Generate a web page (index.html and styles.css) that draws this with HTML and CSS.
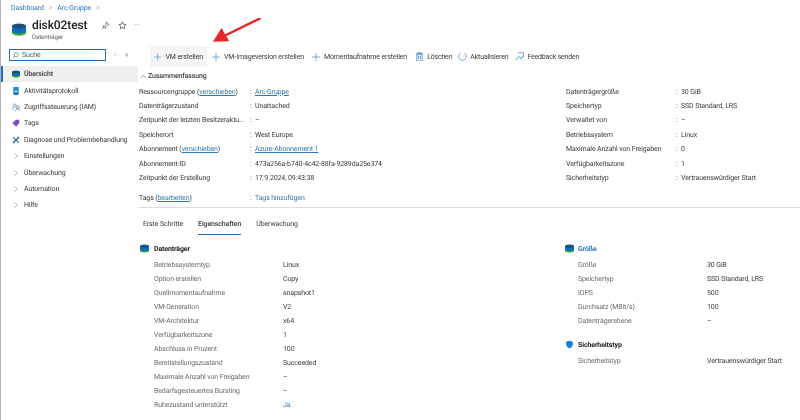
FILE: index.html
```html
<!DOCTYPE html>
<html lang="de">
<head>
<meta charset="utf-8">
<title>disk02test</title>
<link rel="stylesheet" href="styles.css">
</head>
<body>
<svg width="0" height="0" class="defs">
  <symbol id="disk" viewBox="0 0 16 14">
    <path d="M0 8.500h16V11c0 1.700-3.600 3-8 3s-8-1.300-8-3z" fill="#3fa535"/>
    <path d="M0 3h16v6c0 1.400-3.600 2.500-8 2.500S0 10.400 0 9z" fill="#0f6cbd"/>
    <ellipse cx="8" cy="3" rx="8" ry="3" fill="#1d4f7c"/>
  </symbol>
</svg>
<div class="page">
  <nav class="crumbs"><a>Dashboard</a><span class="sep">&gt;</span><a>Arc-Gruppe</a><span class="sep">&gt;</span></nav>
  <header class="title-row">
    <svg class="title-icon"><use href="#disk"/></svg>
    <div class="title-text">
      <div class="title-line">
        <h1>disk02test</h1>
        <svg class="ti pin" viewBox="0 0 10 10"><path d="M6 1l3 3-2 .8-1.800 1.800-.2 1.700L2.200 5.500l1.700-.2 1.800-1.800zM3.500 6.500L1 9" fill="none" stroke="#555" stroke-width=".8"/></svg>
        <svg class="ti star" viewBox="0 0 10 10"><path d="M5 1l1.200 2.600 2.800.3-2.100 1.900.6 2.800L5 7.200 2.500 8.600l.6-2.800L1 3.900l2.800-.3z" fill="none" stroke="#444" stroke-width=".8"/></svg>
        <span class="more">···</span>
      </div>
      <div class="subtitle">Datenträger</div>
    </div>
  </header>
  <div class="main">
    <aside class="side">
      <div class="search-row">
        <div class="search">
          <svg class="search-ic" viewBox="0 0 10 10"><circle cx="6" cy="4" r="2.800" fill="none" stroke="#555" stroke-width=".9"/><path d="M4 6L1 9" stroke="#555" stroke-width=".9"/></svg>
          <span>Suche</span>
        </div>
        <span class="s-ic">◦</span>
        <span class="s-ic">«</span>
      </div>
      <ul class="menu">
        <li class="item active"><svg class="m-ic"><use href="#disk"/></svg>Übersicht</li>
        <li class="item"><svg class="m-ic" viewBox="0 0 12 12"><rect x="2" width="8" height="12" rx="1" fill="#1b87c9"/><rect x="3.500" y="5.500" width="5" height="1.500" fill="#fff"/></svg>Aktivitätsprotokoll</li>
        <li class="item"><svg class="m-ic" viewBox="0 0 12 12"><circle cx="4" cy="3.500" r="2" fill="none" stroke="#3b7fc4" stroke-width="1"/><circle cx="8.500" cy="6.500" r="2" fill="none" stroke="#555" stroke-width="1"/><path d="M1 10c0-2.500 1.500-3.500 3-3.500M5 12c0-2 1.500-3 3.500-3s3 1 3 3" fill="none" stroke="#3b7fc4" stroke-width="1"/></svg>Zugriffssteuerung (IAM)</li>
        <li class="item"><svg class="m-ic" viewBox="0 0 12 12"><path d="M6 1h5v5l-5 5.500L.5 6z" fill="#7c4fb5"/></svg>Tags</li>
        <li class="item"><svg class="m-ic" viewBox="0 0 12 12"><path d="M1.500 1.500l9 9" stroke="#3c8fd0" stroke-width="2"/><path d="M10.500 1.500l-9 9" stroke="#1f5f95" stroke-width="2"/></svg>Diagnose und Problembehandlung</li>
        <li class="item"><svg class="m-ic chev" viewBox="0 0 12 12"><path d="M4 2l4 4-4 4" fill="none" stroke="#666"/></svg>Einstellungen</li>
        <li class="item"><svg class="m-ic chev" viewBox="0 0 12 12"><path d="M4 2l4 4-4 4" fill="none" stroke="#666"/></svg>Überwachung</li>
        <li class="item"><svg class="m-ic chev" viewBox="0 0 12 12"><path d="M4 2l4 4-4 4" fill="none" stroke="#666"/></svg>Automation</li>
        <li class="item"><svg class="m-ic chev" viewBox="0 0 12 12"><path d="M4 2l4 4-4 4" fill="none" stroke="#666"/></svg>Hilfe</li>
      </ul>
    </aside>
    <main class="content">
      <div class="toolbar">
        <button class="tool t1"><svg class="t-ic" viewBox="0 0 10 10"><path d="M5 0v10M0 5h10" stroke="#3f83c4" stroke-width=".8"/></svg>VM erstellen</button>
        <button class="tool t2"><svg class="t-ic" viewBox="0 0 10 10"><path d="M5 0v10M0 5h10" stroke="#3f83c4" stroke-width=".8"/></svg>VM-Imageversion erstellen</button>
        <button class="tool"><svg class="t-ic" viewBox="0 0 10 10"><path d="M5 0v10M0 5h10" stroke="#3f83c4" stroke-width=".8"/></svg>Momentaufnahme erstellen</button>
        <button class="tool t4"><svg class="t-ic wide" viewBox="0 0 10 10"><path d="M2 2.500h6V10H2zM1 2h8M3.500 1.500V.5h3v1M4 4v4M6 4v4" fill="none" stroke="#3f83c4" stroke-width=".9"/></svg>Löschen</button>
        <button class="tool t5"><svg class="t-ic wide" viewBox="0 0 10 10"><path d="M7 1.200A4.300 4.300 0 1 1 3 1.200" fill="none" stroke="#3f83c4" stroke-width=".8"/></svg>Aktualisieren</button>
        <button class="tool t6"><svg class="t-ic wide" viewBox="0 0 10 10"><path d="M3.500.8h6v5h-3M1 9.500l2.500-4M3.500 5.500h2l2 4" fill="none" stroke="#3f83c4" stroke-width=".8"/></svg>Feedback senden</button>
      </div>
      <div class="summary-head"><svg class="caret" viewBox="0 0 8 8"><path d="M1 5.500L4 2.500l3 3" fill="none" stroke="#666" stroke-width=".8"/></svg>Zusammenfassung</div>
      <section class="summary">
        <dl class="ess">
          <div class="row"><dt>Ressourcengruppe (<a class="u">verschieben</a>)</dt><dd><span class="c">:</span><a class="u">Arc-Gruppe</a></dd></div>
          <div class="row"><dt>Datenträgerzustand</dt><dd><span class="c">:</span>Unattached</dd></div>
          <div class="row"><dt>Zeitpunkt der letzten Besitzeraktu...</dt><dd><span class="c">:</span>–</dd></div>
          <div class="row"><dt>Speicherort</dt><dd><span class="c">:</span>West Europe</dd></div>
          <div class="row"><dt>Abonnement (<a class="u">verschieben</a>)</dt><dd><span class="c">:</span><a class="u">Azure-Abonnement 1</a></dd></div>
          <div class="row"><dt>Abonnement-ID</dt><dd><span class="c">:</span>473a256a-b740-4c42-88fa-9289da25e374</dd></div>
          <div class="row"><dt>Zeitpunkt der Erstellung</dt><dd><span class="c">:</span>17.9.2024, 09:43:38</dd></div>
        </dl>
        <dl class="ess right">
          <div class="row"><dt>Datenträgergröße</dt><dd><span class="c">:</span>30 GiB</dd></div>
          <div class="row"><dt>Speichertyp</dt><dd><span class="c">:</span>SSD Standard, LRS</dd></div>
          <div class="row"><dt>Verwaltet von</dt><dd><span class="c">:</span>–</dd></div>
          <div class="row"><dt>Betriebssystem</dt><dd><span class="c">:</span>Linux</dd></div>
          <div class="row"><dt>Maximale Anzahl von Freigaben</dt><dd><span class="c">:</span>0</dd></div>
          <div class="row"><dt>Verfügbarkeitszone</dt><dd><span class="c">:</span>1</dd></div>
          <div class="row"><dt>Sicherheitstyp</dt><dd><span class="c">:</span>Vertrauenswürdiger Start</dd></div>
        </dl>
      </section>
      <div class="tags row"><dt>Tags (<a class="u">bearbeiten</a>)</dt><dd><span class="c">:</span><a>Tags hinzufügen</a></dd></div>
      <div class="tabs">
        <span class="tab">Erste Schritte</span>
        <span class="tab on">Eigenschaften</span>
        <span class="tab">Überwachung</span>
      </div>
      <section class="props">
        <div class="pcol left">
          <h2><svg class="h-ic"><use href="#disk"/></svg>Datenträger</h2>
          <div class="prow"><span>Betriebssystemtyp</span><b>Linux</b></div>
          <div class="prow"><span>Option erstellen</span><b>Copy</b></div>
          <div class="prow"><span>Quellmomentaufnahme</span><b>snapshot1</b></div>
          <div class="prow"><span>VM-Generation</span><b>V2</b></div>
          <div class="prow"><span>VM-Architektur</span><b>x64</b></div>
          <div class="prow"><span>Verfügbarkeitszone</span><b>1</b></div>
          <div class="prow"><span>Abschluss in Prozent</span><b>100</b></div>
          <div class="prow"><span>Bereitstellungszustand</span><b>Succeeded</b></div>
          <div class="prow"><span>Maximale Anzahl von Freigaben</span><b>–</b></div>
          <div class="prow"><span>Bedarfsgesteuertes Bursting</span><b>–</b></div>
          <div class="prow"><span>Ruhezustand unterstützt</span><b class="link">Ja</b></div>
        </div>
        <div class="pcol rightcol">
          <h2 class="link"><svg class="h-ic"><use href="#disk"/></svg>Größe</h2>
          <div class="prow"><span>Größe</span><b>30 GiB</b></div>
          <div class="prow"><span>Speichertyp</span><b>SSD Standard, LRS</b></div>
          <div class="prow"><span>IOPS</span><b>500</b></div>
          <div class="prow"><span>Durchsatz (MBit/s)</span><b>100</b></div>
          <div class="prow"><span>Datenträgerebene</span><b>–</b></div>
          <h2 class="second"><svg class="h-ic" viewBox="0 0 16 14"><path d="M8 0c2 1.500 3.500 2 6 2v5c0 3.500-3 5.800-6 7-3-1.200-6-3.500-6-7V2c2.500 0 4-.5 6-2z" fill="#1a7fd4"/></svg>Sicherheitstyp</h2>
          <div class="prow"><span>Sicherheitstyp</span><b>Vertrauenswürdiger Start</b></div>
        </div>
      </section>
    </main>
  </div>
  <svg class="arrow" viewBox="0 0 60 34"><path d="M55 0L14 20" stroke="#e8252a" stroke-width="2.600" fill="none"/><path d="M2 26l10-15 8 15z" fill="#e8252a" transform="rotate(-2 10 20)"/></svg>
</div>
</body>
</html>
```
FILE: styles.css
```css
* { box-sizing: border-box; }
html, body { margin: 0; padding: 0; background: #fff; }
.defs { position: absolute; }
.page {
  position: relative;
  width: 800px;
  height: 420px;
  overflow: hidden;
  border-left: 1px solid #b5b5b5;
  font-family: Roboto, "Open Sans", sans-serif;
  font-size: 7px;
  letter-spacing: -.12px;
  line-height: 12px;
  color: #3a3a3a;
  text-rendering: geometricPrecision;
  filter: blur(0.4px);
}
a { color: #2f78b8; }
a.u { text-decoration: underline; }
.crumbs { display: flex; align-items: center; gap: 5px; height: 14px; margin-top: 1px; padding-left: 10px; color: #2f78b8; }
.sep { color: #999; }
.title-row { display: flex; gap: 6px; height: 30px; padding: 2px 0 0 11px; }
.title-icon { width: 14px; height: 13px; margin-top: 6px; }
.title-line { display: flex; align-items: center; height: 16px; }
h1 { margin: 0 13px 0 0; font-size: 12px; letter-spacing: -.1px; font-weight: 500; color: #222; line-height: 16px; }
.ti { width: 9px; height: 9px; margin-right: 8px; }
.more { color: #777; font-size: 7px; }
.subtitle { font-size: 6.200px; line-height: 9px; color: #666; }
.main { display: flex; margin-top: 1px; }
.side { width: 137px; flex: none; }
.search-row { display: flex; align-items: center; height: 22px; padding-left: 8px; margin-top: -2px; }
.search { display: flex; align-items: center; gap: 3px; width: 97px; height: 12px; border: 1px solid #1f6fb5; padding-left: 2px; color: #555; }
.search-ic { width: 7px; height: 7px; }
.s-ic { color: #999; margin-left: 8px; font-size: 8px; }
.menu { list-style: none; margin: 0; padding: 0; }
.item { display: flex; align-items: center; gap: 3px; height: 16.400px; padding-left: 11px; white-space: nowrap; }
.item.active { background: #efefef; border-left: 2px solid #1f6fb5; padding-left: 9px; font-weight: 500; }
.m-ic { width: 8px; height: 8px; flex: none; margin-right: 1px; }
.chev { opacity: .8; }
.content { flex: 1; min-width: 0; padding-left: 1px; }
.toolbar { display: flex; align-items: center; height: 21px; margin-left: 11px; margin-bottom: 3px; }
.tool { display: flex; align-items: center; gap: 4px; height: 21px; padding: 0 4px; border: 0; background: none; font: inherit; letter-spacing: inherit; color: #3a3a3a; white-space: nowrap; }
.t1 { background: #f4f4f4; width: 57px; }
.t2 { margin-left: 1px; }
.t4, .t5, .t6 { gap: 3px; letter-spacing: -.18px; }
.t5 { margin-left: -2px; }
.t6 { margin-left: -1px; }
.t-ic { width: 8px; height: 8px; }
.t-ic.wide { width: 9px; height: 9px; }
.summary-head { display: flex; align-items: center; gap: 1px; height: 12px; padding-left: 1px; font-weight: 500; }
.caret { width: 7px; height: 7px; }
.summary { display: flex; padding-top: 2.500px; }
.ess { margin: 0; width: 427px; }
.ess.right { width: auto; }
.ess.right dt { width: 110px; }
.row { display: flex; height: 14.400px; align-items: center; white-space: nowrap; }
dt { width: 111px; flex: none; }
.c { display: inline-block; width: 5px; }
dd { margin: 0; }
.tags { height: 16px; margin-top: 6.500px; border-bottom: 1px solid #ddd; padding-bottom: 2px; }
.tabs { display: flex; gap: 15px; height: 28px; padding: 9px 0 0 4px; }
.tab { height: 18px; padding-top: 1px; }
.tab.on { border-bottom: 1.500px solid #1f6fb5; font-weight: 500; }
.props { display: flex; padding-top: 6px; }
.pcol.left { width: 425px; }
h2 { display: flex; align-items: center; gap: 5px; height: 14px; margin: 0 0 2px; padding-left: 1px; font-size: 7px; font-weight: 700; color: #222; }
.rightcol h2 { gap: 4px; }
h2.link { color: #2f78b8; }
h2.second { margin-top: 10px; }
.h-ic { width: 9px; height: 9px; }
.prow { display: flex; height: 14px; align-items: center; padding-left: 15px; white-space: nowrap; }
.rightcol .prow { padding-left: 14px; }
.prow span { width: 129px; flex: none; color: #6b6b6b; }
.prow b { font-weight: 400; }
b.link { color: #2f78b8; }
.arrow { position: absolute; left: 210px; top: 18px; width: 54px; height: 31px; }
```
